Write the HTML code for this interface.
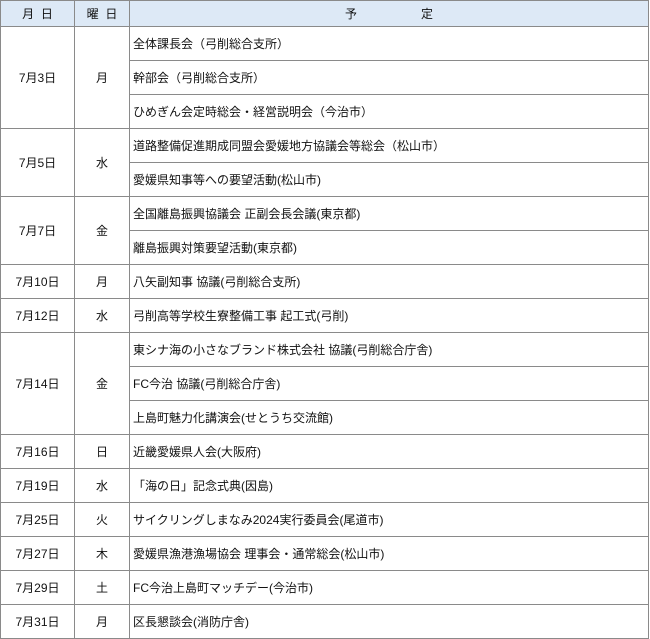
<!DOCTYPE html>
<html><head><meta charset="utf-8"><style>
html,body{margin:0;padding:0;background:#fff;}
body{width:650px;height:639px;overflow:hidden;font-family:"Liberation Sans","Noto Sans CJK JP",sans-serif;font-size:12px;color:#111;}
table{border-collapse:collapse;table-layout:fixed;position:absolute;left:0;top:0;width:649px;border:1.5px solid #333;}
td{border:1px solid #8a8a8a;height:33px;padding:0;vertical-align:middle;}
td.c{text-align:center;}
td.t{padding-left:3px;white-space:nowrap;}
tr.h td{height:25px;background:#dde9f6;text-align:center;}
</style></head><body>
<table>
<colgroup><col style="width:74px"><col style="width:55px"><col></colgroup>
<tr class="h"><td>月&nbsp;&nbsp;日</td><td>曜&nbsp;&nbsp;日</td><td><span>予</span><span style="display:inline-block;width:64px"></span><span>定</span></td></tr>
<tr><td class="c" rowspan="3">7月3日</td><td class="c" rowspan="3">月</td><td class="t">全体課長会（弓削総合支所）</td></tr>
<tr><td class="t">幹部会（弓削総合支所）</td></tr>
<tr><td class="t">ひめぎん会定時総会・経営説明会（今治市）</td></tr>
<tr><td class="c" rowspan="2">7月5日</td><td class="c" rowspan="2">水</td><td class="t">道路整備促進期成同盟会愛媛地方協議会等総会（松山市）</td></tr>
<tr><td class="t">愛媛県知事等への要望活動(松山市)</td></tr>
<tr><td class="c" rowspan="2">7月7日</td><td class="c" rowspan="2">金</td><td class="t">全国離島振興協議会 正副会長会議(東京都)</td></tr>
<tr><td class="t">離島振興対策要望活動(東京都)</td></tr>
<tr><td class="c">7月10日</td><td class="c">月</td><td class="t">八矢副知事 協議(弓削総合支所)</td></tr>
<tr><td class="c">7月12日</td><td class="c">水</td><td class="t">弓削高等学校生寮整備工事 起工式(弓削)</td></tr>
<tr><td class="c" rowspan="3">7月14日</td><td class="c" rowspan="3">金</td><td class="t">東シナ海の小さなブランド株式会社 協議(弓削総合庁舎)</td></tr>
<tr><td class="t">FC今治 協議(弓削総合庁舎)</td></tr>
<tr><td class="t">上島町魅力化講演会(せとうち交流館)</td></tr>
<tr><td class="c">7月16日</td><td class="c">日</td><td class="t">近畿愛媛県人会(大阪府)</td></tr>
<tr><td class="c">7月19日</td><td class="c">水</td><td class="t">「海の日」記念式典(因島)</td></tr>
<tr><td class="c">7月25日</td><td class="c">火</td><td class="t">サイクリングしまなみ2024実行委員会(尾道市)</td></tr>
<tr><td class="c">7月27日</td><td class="c">木</td><td class="t">愛媛県漁港漁場協会 理事会・通常総会(松山市)</td></tr>
<tr><td class="c">7月29日</td><td class="c">土</td><td class="t">FC今治上島町マッチデー(今治市)</td></tr>
<tr><td class="c">7月31日</td><td class="c">月</td><td class="t">区長懇談会(消防庁舎)</td></tr>
</table>
</body></html>
